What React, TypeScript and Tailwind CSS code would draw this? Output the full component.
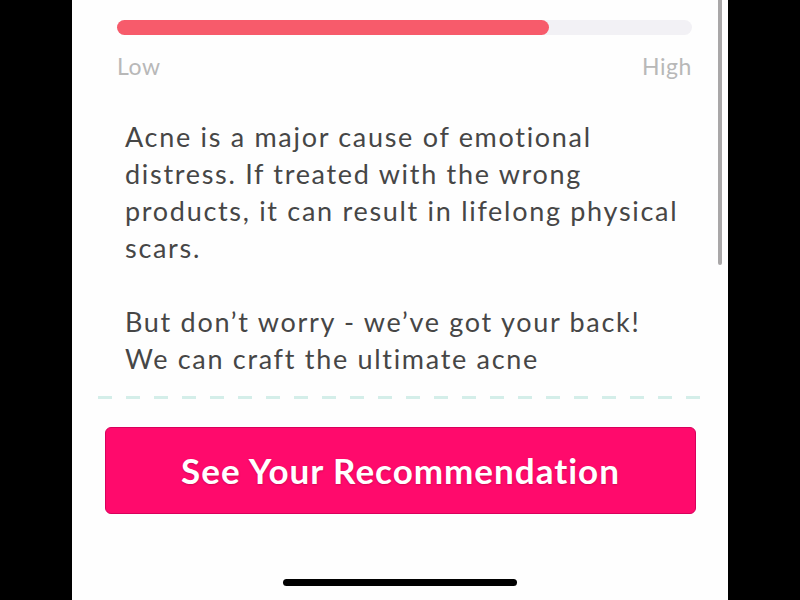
export default function App() {
  return (
    <div className="w-[800px] h-[600px] bg-black flex justify-center">
      <div className="w-[656px] h-full bg-[#fefefe] relative flex flex-col" style={{ fontFamily: "Lato, 'Noto Sans', sans-serif" }}>
        {/* scroll indicator */}
        <div className="absolute right-[6px] top-0 w-[4px] h-[265px] rounded-b-full bg-[#a9a7a8]" />

        {/* scrolling content */}
        <div className="h-[385px] overflow-hidden pt-[20px]">
          <div className="ml-[45px] w-[575px] h-[15px] rounded-full bg-[#f2f1f5]">
            <div className="w-[432px] h-full rounded-full bg-[#f75b6b]" />
          </div>
          <div className="ml-[45px] w-[575px] mt-[16px] flex justify-between text-[23px] leading-[30px] text-[#b8b8b8] tracking-[0.6px]">
            <span>Low</span>
            <span>High</span>
          </div>
          <div className="ml-[53px] w-[590px] mt-[37px] text-[27px] leading-[37px] text-[#464646] tracking-[1.7px] whitespace-nowrap">
            <p>
              Acne is a major cause of emotional
              <br />
              distress. If treated with the wrong
              <br />
              products, it can result in lifelong physical
              <br />
              scars.
            </p>
            <p className="mt-[37px]">
              But don’t worry - we’ve got your back!
              <br />
              We can craft the ultimate acne
            </p>
          </div>
        </div>

        {/* divider */}
        <div className="ml-[26px] mt-[11px] w-[604px] h-[3px] bg-[repeating-linear-gradient(90deg,#d4eee9_0px,#d4eee9_14px,transparent_14px,transparent_28px)]" />

        {/* CTA */}
        <button className="ml-[33px] mt-[28px] w-[591px] h-[87px] rounded-[6px] bg-[#ff0a6c] border border-[#d8005c] text-white font-bold text-[35px] tracking-[1px] [text-shadow:0_1px_2px_rgba(120,0,40,0.35)]">
          See Your Recommendation
        </button>

        {/* home indicator */}
        <div className="mt-auto mb-[14px] mx-auto w-[234px] h-[7px] rounded-full bg-black" />
      </div>
    </div>
  );
}
